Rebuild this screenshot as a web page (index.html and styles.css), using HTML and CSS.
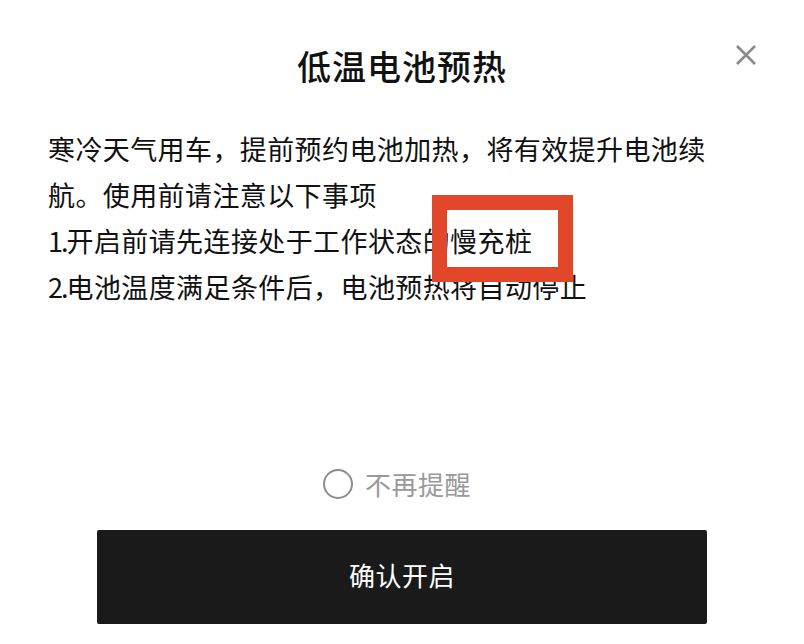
FILE: index.html
```html
<!DOCTYPE html>
<html lang="zh-CN">

<head>
    <meta charset="UTF-8">
    <meta name="viewport" content="width=device-width, initial-scale=1.0">
    <title>低温电池预热</title>
    <link rel="stylesheet" href="styles.css">
</head>

<body>
    <div class="dialog">
        <a href="javascript:;" class="close">
            <svg width="22" height="22" viewBox="0 0 22 22">
                <path d="M2 2 L20 20 M20 2 L2 20" stroke="#8a8a8a" stroke-width="2.6" fill="none" />
            </svg>
        </a>
        <h1 class="title">低温电池预热</h1>
        <div class="content">
            <p>寒冷天气用车，提前预约电池加热，将有效提升电池续航。使用前请注意以下事项</p>
            <p><span class="num">1.</span>开启前请先连接处于工作状态的慢充桩</p>
            <p><span class="num">2.</span>电池温度满足条件后，电池预热将自动停止</p>
        </div>
        <label class="remind">
            <span class="radio"></span>
            <span class="remindText">不再提醒</span>
        </label>
        <a href="javascript:;" class="confirm">确认开启</a>

        <!-- 标注框 -->
        <div class="mark"></div>
    </div>
</body>

</html>
```

FILE: styles.css
```css
* {
    margin: 0;
    padding: 0;
}

a {
    text-decoration: none;
}

body {
    background-color: #fff;
    font-family: "Noto Sans CJK SC", "Noto Sans", sans-serif;
    color: #111;
}

.dialog {
    position: relative;
    width: 804px;
    height: 644px;
    display: flex;
    flex-direction: column;
    align-items: center;
}

.close {
    position: absolute;
    top: 44px;
    right: 47px;
    width: 22px;
    height: 22px;
}

.close svg {
    display: block;
}

.title {
    margin-top: 42px;
    font-size: 34px;
    line-height: 48px;
    font-weight: 500;
    letter-spacing: 1px;
    color: #111;
}

.content {
    align-self: flex-start;
    margin-top: 36px;
    padding-left: 48px;
    width: 672px;
    font-size: 27px;
    letter-spacing: .4px;
    line-height: 46px;
}

/* 序号数字窄一些 */
.num {
    letter-spacing: -2px;
}

.remind {
    margin-top: 158px;
    display: flex;
    align-items: center;
    height: 32px;
    margin-left: -10px;
}

.radio {
    width: 26px;
    height: 26px;
    border: 2px solid #8c8c8c;
    border-radius: 50%;
    margin-right: 12px;
}

.remindText {
    font-size: 26px;
    color: #999;
    letter-spacing: .5px;
    padding-bottom: 2px;
}

.confirm {
    margin-top: 30px;
    width: 610px;
    height: 94px;
    padding-bottom: 6px;
    box-sizing: border-box;
    background-color: #1a1a1a;
    border-radius: 2px;
    display: flex;
    align-items: center;
    justify-content: center;
    color: #fff;
    font-size: 26px;
    letter-spacing: .5px;
}

.mark {
    position: absolute;
    left: 432px;
    top: 195px;
    width: 111px;
    height: 57px;
    border: 15px solid #e2472a;
}
```
